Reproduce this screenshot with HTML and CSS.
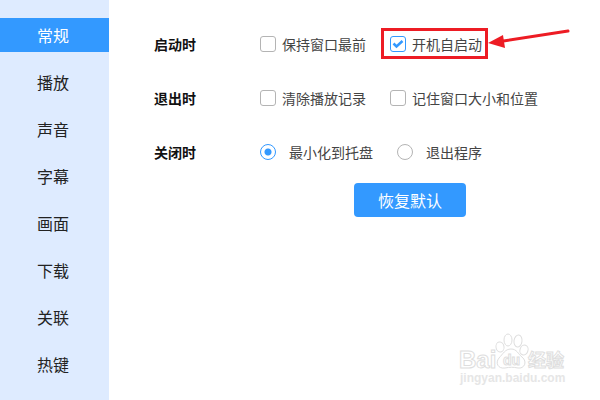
FILE: index.html
```
<!DOCTYPE html>
<html lang="zh-CN">
<head>
    <meta charset="UTF-8">
    <meta name="viewport" content="width=device-width, initial-scale=1.0">
    <title>设置</title>
    <link rel="stylesheet" href="styles.css">
</head>
<body>
    <nav class="sidebar">
        <a href="#general" class="active">常规</a>
        <a href="#play">播放</a>
        <a href="#sound">声音</a>
        <a href="#subtitle">字幕</a>
        <a href="#video">画面</a>
        <a href="#download">下载</a>
        <a href="#assoc">关联</a>
        <a href="#hotkeys">热键</a>
    </nav>

    <main>
        <form class="settings">
            <div class="row" role="group" aria-labelledby="start-title">
                <strong id="start-title">启动时</strong>
                <label class="option"><input type="checkbox">保持窗口最前</label>
                <label class="option marked"><input type="checkbox" checked>开机自启动
                    <svg class="arrow" width="82" height="20" viewBox="0 0 82 20" aria-hidden="true">
                        <path d="M80 3 L12 13.5" stroke="#ed1c24" stroke-width="3" stroke-linecap="round"/>
                        <path d="M0 15 L15 7 L17 20 Z" fill="#ed1c24"/>
                    </svg>
                </label>
            </div>

            <div class="row" role="group" aria-labelledby="exit-title">
                <strong id="exit-title">退出时</strong>
                <label class="option"><input type="checkbox">清除播放记录</label>
                <label class="option"><input type="checkbox">记住窗口大小和位置</label>
            </div>

            <div class="row row-radio" role="group" aria-labelledby="close-title">
                <strong id="close-title">关闭时</strong>
                <label class="option"><input type="radio" name="close" checked>最小化到托盘</label>
                <label class="option"><input type="radio" name="close">退出程序</label>
            </div>

            <button type="reset">恢复默认</button>
        </form>
    </main>

    <svg class="watermark" width="112" height="56" viewBox="0 0 112 56" aria-hidden="true">
        <g class="mark">
            <text class="brand" x="2" y="36">Bai</text>
            <ellipse cx="43" cy="15" rx="4" ry="5" transform="rotate(-12 43 15)"/>
            <ellipse cx="51" cy="8" rx="4" ry="6"/>
            <ellipse cx="61" cy="9" rx="4" ry="6" transform="rotate(8 61 9)"/>
            <ellipse cx="67" cy="18" rx="4" ry="5" transform="rotate(18 67 18)"/>
            <path d="M54 17 C60 17 61 22 65 25 C71 30 67 37 61 36 C56 35 53 35 48 36 C41 37 38 31 42 26 C46 22 48 17 54 17 Z"/>
            <text class="du" x="46" y="33">du</text>
            <text class="word" x="71" y="35">经验</text>
        </g>
        <text class="site" x="3" y="50">jingyan.baidu.com</text>
    </svg>
</body>
</html>
```

FILE: styles.css
```
* {
    box-sizing: border-box;
}

body {
    display: flex;
    min-height: 100vh;
    margin: 0;
    position: relative;
    background-color: #fff;
    color: #444;
    font-family: "Noto Sans CJK SC", sans-serif;
    font-size: 14px;
    line-height: 20px;
}

.sidebar {
    display: flex;
    flex-direction: column;
    gap: 13px;
    flex: 0 0 109px;
    padding-top: 18px;
    background-color: #deebff;
}

.sidebar a {
    padding-right: 3px;
    color: #222;
    font-size: 16px;
    line-height: 34px;
    text-align: center;
    text-decoration: none;
}

.sidebar a.active {
    background-color: #3399ff;
    color: #fff;
}

main {
    flex: 1;
    padding: 34px 20px 20px 45px;
}

.settings {
    display: flex;
    flex-direction: column;
    gap: 34px;
}

.row {
    display: grid;
    grid-template-columns: 106px 130px 1fr;
    align-items: center;
}

.row-radio {
    grid-template-columns: 106px 137px 1fr;
}

.row strong {
    color: #111;
    font-weight: bold;
}

.option {
    display: flex;
    align-items: center;
    justify-self: start;
    gap: 6px;
    position: relative;
    white-space: nowrap;
}

.row-radio .option {
    gap: 13px;
}

.option input {
    appearance: none;
    flex: none;
    width: 16px;
    height: 16px;
    margin: 0;
    border: 1px solid #b4b4b4;
    border-radius: 3px;
    background-color: #fff;
}

.option input:checked {
    border-color: #3399ff;
}

.option input[type="checkbox"]:checked {
    background-image: url("data:image/svg+xml,%3Csvg xmlns='http://www.w3.org/2000/svg' viewBox='0 0 14 14'%3E%3Cpath d='M2.5 6.5l3 3 6-5.5' fill='none' stroke='%233399ff' stroke-width='2.5'/%3E%3C/svg%3E");
}

.option input[type="radio"] {
    border-radius: 50%;
}

.option input[type="radio"]:checked {
    background-image: radial-gradient(circle, #3399ff 3px, transparent 4px);
}

/* red frame around the option */
.marked::before {
    content: "";
    position: absolute;
    inset: -6px -6px -5px -9px;
    border: 3px solid #ed1c24;
}

.arrow {
    position: absolute;
    left: 98px;
    top: -6px;
    fill: none;
}

button {
    align-self: flex-start;
    width: 112px;
    height: 34px;
    margin: -13px 0 0 200px;
    padding: 0;
    border: none;
    border-radius: 4px;
    background-color: #3399ff;
    color: #fff;
    font-family: inherit;
    font-size: 16px;
    cursor: pointer;
}

.watermark {
    position: absolute;
    right: 31px;
    bottom: 12px;
    pointer-events: none;
}

.mark {
    fill: #fff;
    stroke: #dedede;
    stroke-width: 1;
}

.brand {
    font: bold 24px "Liberation Sans", sans-serif;
}

.du {
    font: bold 14px "Liberation Sans", sans-serif;
}

.word {
    font: bold 18px "Noto Sans CJK SC", sans-serif;
}

.site {
    fill: #e6e6e6;
    font: bold 12px "Liberation Sans", sans-serif;
}
```
